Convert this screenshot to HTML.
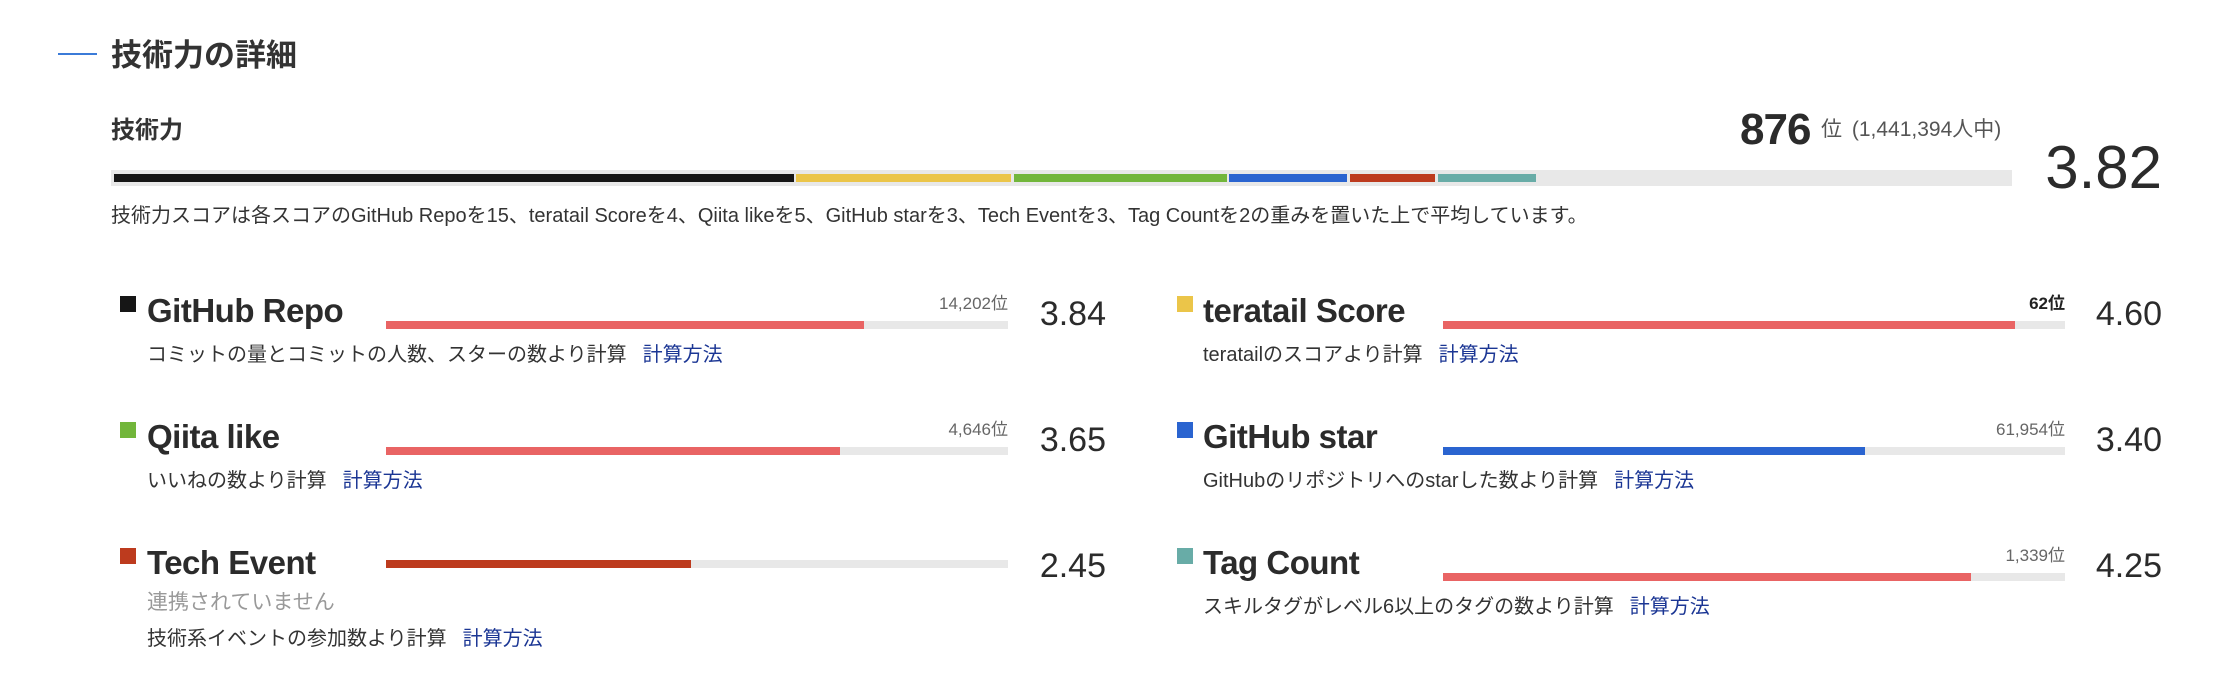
<!DOCTYPE html>
<html><head><meta charset="utf-8"><style>
*{margin:0;padding:0;box-sizing:border-box}
body{width:2224px;height:686px;background:#fff;position:relative;overflow:hidden;font-family:"Liberation Sans","Noto Sans CJK JP",sans-serif;color:#333}
.a{position:absolute;white-space:nowrap}
.sq{position:absolute;width:16px;height:16px}
.t{position:absolute;font-size:33px;font-weight:bold;line-height:36px;color:#2b2b2b;letter-spacing:-0.5px}
.trk{position:absolute;height:8px;background:#e8e8e8;width:622px}
.trk i{position:absolute;left:0;top:0;height:8px;display:block}
.rk{position:absolute;font-size:17px;color:#666;line-height:20px;text-align:right;width:200px}
.sc{position:absolute;font-size:34px;color:#2b2b2b;line-height:36px;text-align:right;width:150px}
.d{position:absolute;font-size:20px;line-height:22px;color:#333;white-space:nowrap}
.d a{color:#1b3694;margin-left:16px;text-decoration:none}
</style></head><body>
<div class="a" style="left:58px;top:53px;width:39px;height:2px;background:#3b7bd8"></div>
<div class="a" style="left:111px;top:38px;font-size:31px;font-weight:bold;line-height:36px;color:#333">技術力の詳細</div>
<div class="a" style="left:111px;top:117px;font-size:24px;font-weight:bold;line-height:28px;color:#333">技術力</div>
<div class="a" style="left:1740px;top:108px;font-size:44px;font-weight:bold;line-height:44px;color:#2b2b2b;letter-spacing:-1px">876</div>
<div class="a" style="left:1821px;top:118px;font-size:21px;line-height:24px;color:#555">位 <span style="margin-left:4px">(1,441,394人中)</span></div>
<div class="a" style="left:2012px;top:138px;width:150px;text-align:right;font-size:60px;line-height:60px;color:#2b2b2b">3.82</div>
<div class="a" style="left:111px;top:170px;width:1901px;height:16px;background:#e8e8e8"></div>
<div class="a" style="left:114px;top:174px;width:680px;height:8px;background:#161616"></div>
<div class="a" style="left:796px;top:174px;width:215px;height:8px;background:#ebc549"></div>
<div class="a" style="left:1014px;top:174px;width:213px;height:8px;background:#72b63b"></div>
<div class="a" style="left:1229px;top:174px;width:118px;height:8px;background:#2a64d0"></div>
<div class="a" style="left:1350px;top:174px;width:85px;height:8px;background:#bd3b1e"></div>
<div class="a" style="left:1438px;top:174px;width:98px;height:8px;background:#68aca7"></div>
<div class="d" style="left:111px;top:205px;font-size:20px">技術力スコアは各スコアのGitHub Repoを15、teratail Scoreを4、Qiita likeを5、GitHub starを3、Tech Eventを3、Tag Countを2の重みを置いた上で平均しています。</div>

<div class="sq" style="left:120px;top:296px;background:#161616"></div>
<div class="t" style="left:147px;top:293px">GitHub Repo</div>
<div class="rk" style="left:808px;top:294px">14,202位</div>
<div class="trk" style="left:386px;top:321px"><i style="width:478px;background:#e96464"></i></div>
<div class="sc" style="left:956px;top:296px">3.84</div>
<div class="d" style="left:147px;top:344px">コミットの量とコミットの人数、スターの数より計算<a>計算方法</a></div>

<div class="sq" style="left:120px;top:422px;background:#72b63b"></div>
<div class="t" style="left:147px;top:419px">Qiita like</div>
<div class="rk" style="left:808px;top:420px">4,646位</div>
<div class="trk" style="left:386px;top:447px"><i style="width:454px;background:#e96464"></i></div>
<div class="sc" style="left:956px;top:422px">3.65</div>
<div class="d" style="left:147px;top:470px">いいねの数より計算<a>計算方法</a></div>

<div class="sq" style="left:120px;top:548px;background:#bd3b1e"></div>
<div class="t" style="left:147px;top:545px">Tech Event</div>
<div class="trk" style="left:386px;top:560px"><i style="width:305px;background:#bd3b1e"></i></div>
<div class="sc" style="left:956px;top:548px">2.45</div>
<div class="d" style="left:147px;top:591px;font-size:21px;color:#999;line-height:24px">連携されていません</div>
<div class="d" style="left:147px;top:628px">技術系イベントの参加数より計算<a>計算方法</a></div>

<div class="sq" style="left:1177px;top:296px;background:#ebc549"></div>
<div class="t" style="left:1203px;top:293px">teratail Score</div>
<div class="rk" style="left:1865px;top:294px;font-weight:bold;color:#222">62位</div>
<div class="trk" style="left:1443px;top:321px"><i style="width:572px;background:#e96464"></i></div>
<div class="sc" style="left:2012px;top:296px">4.60</div>
<div class="d" style="left:1203px;top:344px">teratailのスコアより計算<a>計算方法</a></div>

<div class="sq" style="left:1177px;top:422px;background:#2a64d0"></div>
<div class="t" style="left:1203px;top:419px">GitHub star</div>
<div class="rk" style="left:1865px;top:420px">61,954位</div>
<div class="trk" style="left:1443px;top:447px"><i style="width:422px;background:#2a64d0"></i></div>
<div class="sc" style="left:2012px;top:422px">3.40</div>
<div class="d" style="left:1203px;top:470px">GitHubのリポジトリへのstarした数より計算<a>計算方法</a></div>

<div class="sq" style="left:1177px;top:548px;background:#68aca7"></div>
<div class="t" style="left:1203px;top:545px">Tag Count</div>
<div class="rk" style="left:1865px;top:546px">1,339位</div>
<div class="trk" style="left:1443px;top:573px"><i style="width:528px;background:#e96464"></i></div>
<div class="sc" style="left:2012px;top:548px">4.25</div>
<div class="d" style="left:1203px;top:596px">スキルタグがレベル6以上のタグの数より計算<a>計算方法</a></div>
</body></html>
